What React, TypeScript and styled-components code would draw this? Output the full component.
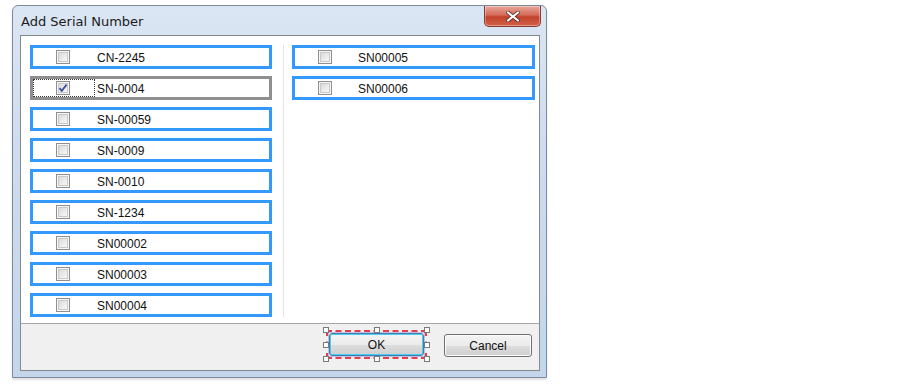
import React from "react";
import styled, { createGlobalStyle } from "styled-components";

const GlobalStyle = createGlobalStyle`
  html, body { margin: 0; padding: 0; background: #ffffff; }
  body { font-family: "Liberation Sans", Arial, sans-serif; }
  * { box-sizing: border-box; }
`;

const Page = styled.div`
  width: 903px;
  height: 389px;
  padding: 5px 0 0 12px;
  overflow: hidden;
`;

const Window = styled.div`
  width: 535px;
  height: 373px;
  border: 1px solid #7b8a9d;
  border-radius: 6px 6px 0 0;
  background: linear-gradient(180deg, #dbe6f3 0%, #cddcee 40%, #c3d6ea 100%);
  display: flex;
  flex-direction: column;
  padding: 0 6px 6px 7px;
  box-shadow: 0 2px 2px rgba(0, 0, 0, 0.12);
`;

const TitleBar = styled.div`
  height: 29px;
  display: flex;
  align-items: center;
  justify-content: space-between;
`;

const Title = styled.div`
  font-family: "DejaVu Sans", "Liberation Sans", sans-serif;
  font-size: 13px;
  color: #1b1b1b;
  padding-left: 1px;
  padding-top: 1px;
`;

const CloseButton = styled.div`
  align-self: flex-start;
  width: 57px;
  height: 21px;
  margin-right: -1px;
  border: 1px solid #8a3a32;
  border-top: none;
  border-radius: 0 0 5px 5px;
  background: linear-gradient(180deg, #e9a99c 0%, #d36a57 45%, #c2402b 55%, #d2624a 100%);
  display: flex;
  align-items: center;
  justify-content: center;
  box-shadow: inset 0 0 0 1px rgba(255, 255, 255, 0.35);
`;

const Client = styled.div`
  flex: 1;
  border: 1px solid #85888c;
  background: #f0f0f0;
  display: flex;
  flex-direction: column;
`;

const List = styled.div`
  height: 288px;
  background: #ffffff;
  border-bottom: 1px solid #a5a5a5;
  display: flex;
`;

const Column = styled.div<{ $left: number; $right: number; $width: number }>`
  width: ${(p) => p.$width}px;
  padding: 9px ${(p) => p.$right}px 0 ${(p) => p.$left}px;
  display: flex;
  flex-direction: column;
  gap: 7px;
`;

const Divider = styled.div`
  width: 1px;
  margin: 9px 0 6px;
  background: #e4e4e4;
`;

const Item = styled.div<{ $focused?: boolean }>`
  height: 24px;
  border: 3px solid ${(p) => (p.$focused ? "#8f8f8f" : "#3399ff")};
  background: #ffffff;
  display: flex;
  align-items: center;
`;

const CheckCell = styled.div<{ $focused?: boolean }>`
  width: 62px;
  height: 18px;
  border: 1px dotted ${(p) => (p.$focused ? "#3a3a3a" : "transparent")};
  display: flex;
  align-items: center;
  padding-left: 22px;
`;

const Box = styled.div`
  width: 14px;
  height: 14px;
  border: 1px solid #8f8f8f;
  background: linear-gradient(135deg, #d2d2d2 0%, #eeeeee 60%, #fbfbfb 100%);
  box-shadow: inset 0 0 0 1px #f6f6f6, inset 0 0 0 2px #c9c9c9;
  display: flex;
  align-items: center;
  justify-content: center;
`;

const Label = styled.span<{ $gap: number }>`
  margin-left: ${(p) => p.$gap}px;
  font-size: 12px;
  color: #111111;
  padding-top: 1px;
`;

const Footer = styled.div`
  flex: 1;
  display: flex;
  justify-content: flex-end;
  align-items: flex-start;
  padding: 9px 7px 0 0;
  gap: 20px;
`;

const ButtonWrap = styled.div`
  position: relative;
`;

const Button = styled.div<{ $default?: boolean; $w: number }>`
  width: ${(p) => p.$w}px;
  height: 23px;
  border: 1px solid ${(p) => (p.$default ? "#3c7fb1" : "#707070")};
  border-radius: 3px;
  background: linear-gradient(180deg, #f4f4f4 0%, #ebebeb 50%, #dddddd 51%, #cfcfcf 100%);
  box-shadow: ${(p) =>
    p.$default ? "inset 0 0 0 1px #48cdf3" : "inset 0 0 0 1px #fbfbfb"};
  display: flex;
  align-items: center;
  justify-content: center;
  font-size: 12px;
  color: #111111;
  margin-top: ${(p) => (p.$default ? 0 : 1)}px;
`;

const Selection = styled.div`
  position: absolute;
  inset: -3px;
  border: 2px dashed #e0404c;
  box-shadow: inset 0 0 0 1px rgba(120, 90, 200, 0.35);
  pointer-events: none;
`;

const Handle = styled.div<{ $x: string; $y: string }>`
  position: absolute;
  width: 6px;
  height: 6px;
  background: #ffffff;
  border: 1px solid #7a7a7a;
  left: ${(p) => p.$x};
  top: ${(p) => p.$y};
  transform: translate(-50%, -50%);
`;

const Check = () => (
  <svg width="10" height="10" viewBox="0 0 10 10">
    <path d="M1.5 5.2 L3.8 7.8 L8.6 1.6" fill="none" stroke="#3b4fa3" strokeWidth="1.8" />
  </svg>
);

const XIcon = () => (
  <svg width="14" height="11" viewBox="0 0 14 11">
    <path d="M2 1.5 L12 9.5 M12 1.5 L2 9.5" stroke="#5a2a24" strokeWidth="3.6" strokeLinecap="round" />
    <path d="M2 1.5 L12 9.5 M12 1.5 L2 9.5" stroke="#ffffff" strokeWidth="2.2" strokeLinecap="round" />
  </svg>
);

const left = ["CN-2245", "SN-0004", "SN-00059", "SN-0009", "SN-0010", "SN-1234", "SN00002", "SN00003", "SN00004"];
const right = ["SN00005", "SN00006"];

const Row = ({ label, focused, gap }: { label: string; focused?: boolean; gap: number }) => (
  <Item $focused={focused}>
    <CheckCell $focused={focused}>
      <Box>{focused && <Check />}</Box>
    </CheckCell>
    <Label $gap={gap}>{label}</Label>
  </Item>
);

const handles: [string, string][] = [
  ["0%", "0%"], ["50%", "0%"], ["100%", "0%"],
  ["0%", "50%"], ["100%", "50%"],
  ["0%", "100%"], ["50%", "100%"], ["100%", "100%"],
];

export default function App() {
  return (
    <>
      <GlobalStyle />
      <Page>
        <Window>
          <TitleBar>
            <Title>Add Serial Number</Title>
            <CloseButton>
              <XIcon />
            </CloseButton>
          </TitleBar>
          <Client>
            <List>
              <Column $width={262} $left={9} $right={11}>
                {left.map((l) => (
                  <Row key={l} label={l} focused={l === "SN-0004"} gap={2} />
                ))}
              </Column>
              <Divider />
              <Column $width={255} $left={8} $right={4}>
                {right.map((l) => (
                  <Row key={l} label={l} gap={1} />
                ))}
              </Column>
            </List>
            <Footer>
              <ButtonWrap>
                <Button $default $w={95}>OK</Button>
                <Selection />
                {handles.map(([x, y]) => (
                  <Handle key={x + y} $x={`calc(${x} + ${x === "0%" ? -3 : x === "100%" ? 3 : 0}px)`} $y={`calc(${y} + ${y === "0%" ? -3 : y === "100%" ? 3 : 0}px)`} />
                ))}
              </ButtonWrap>
              <Button $w={88}>Cancel</Button>
            </Footer>
          </Client>
        </Window>
      </Page>
    </>
  );
}
